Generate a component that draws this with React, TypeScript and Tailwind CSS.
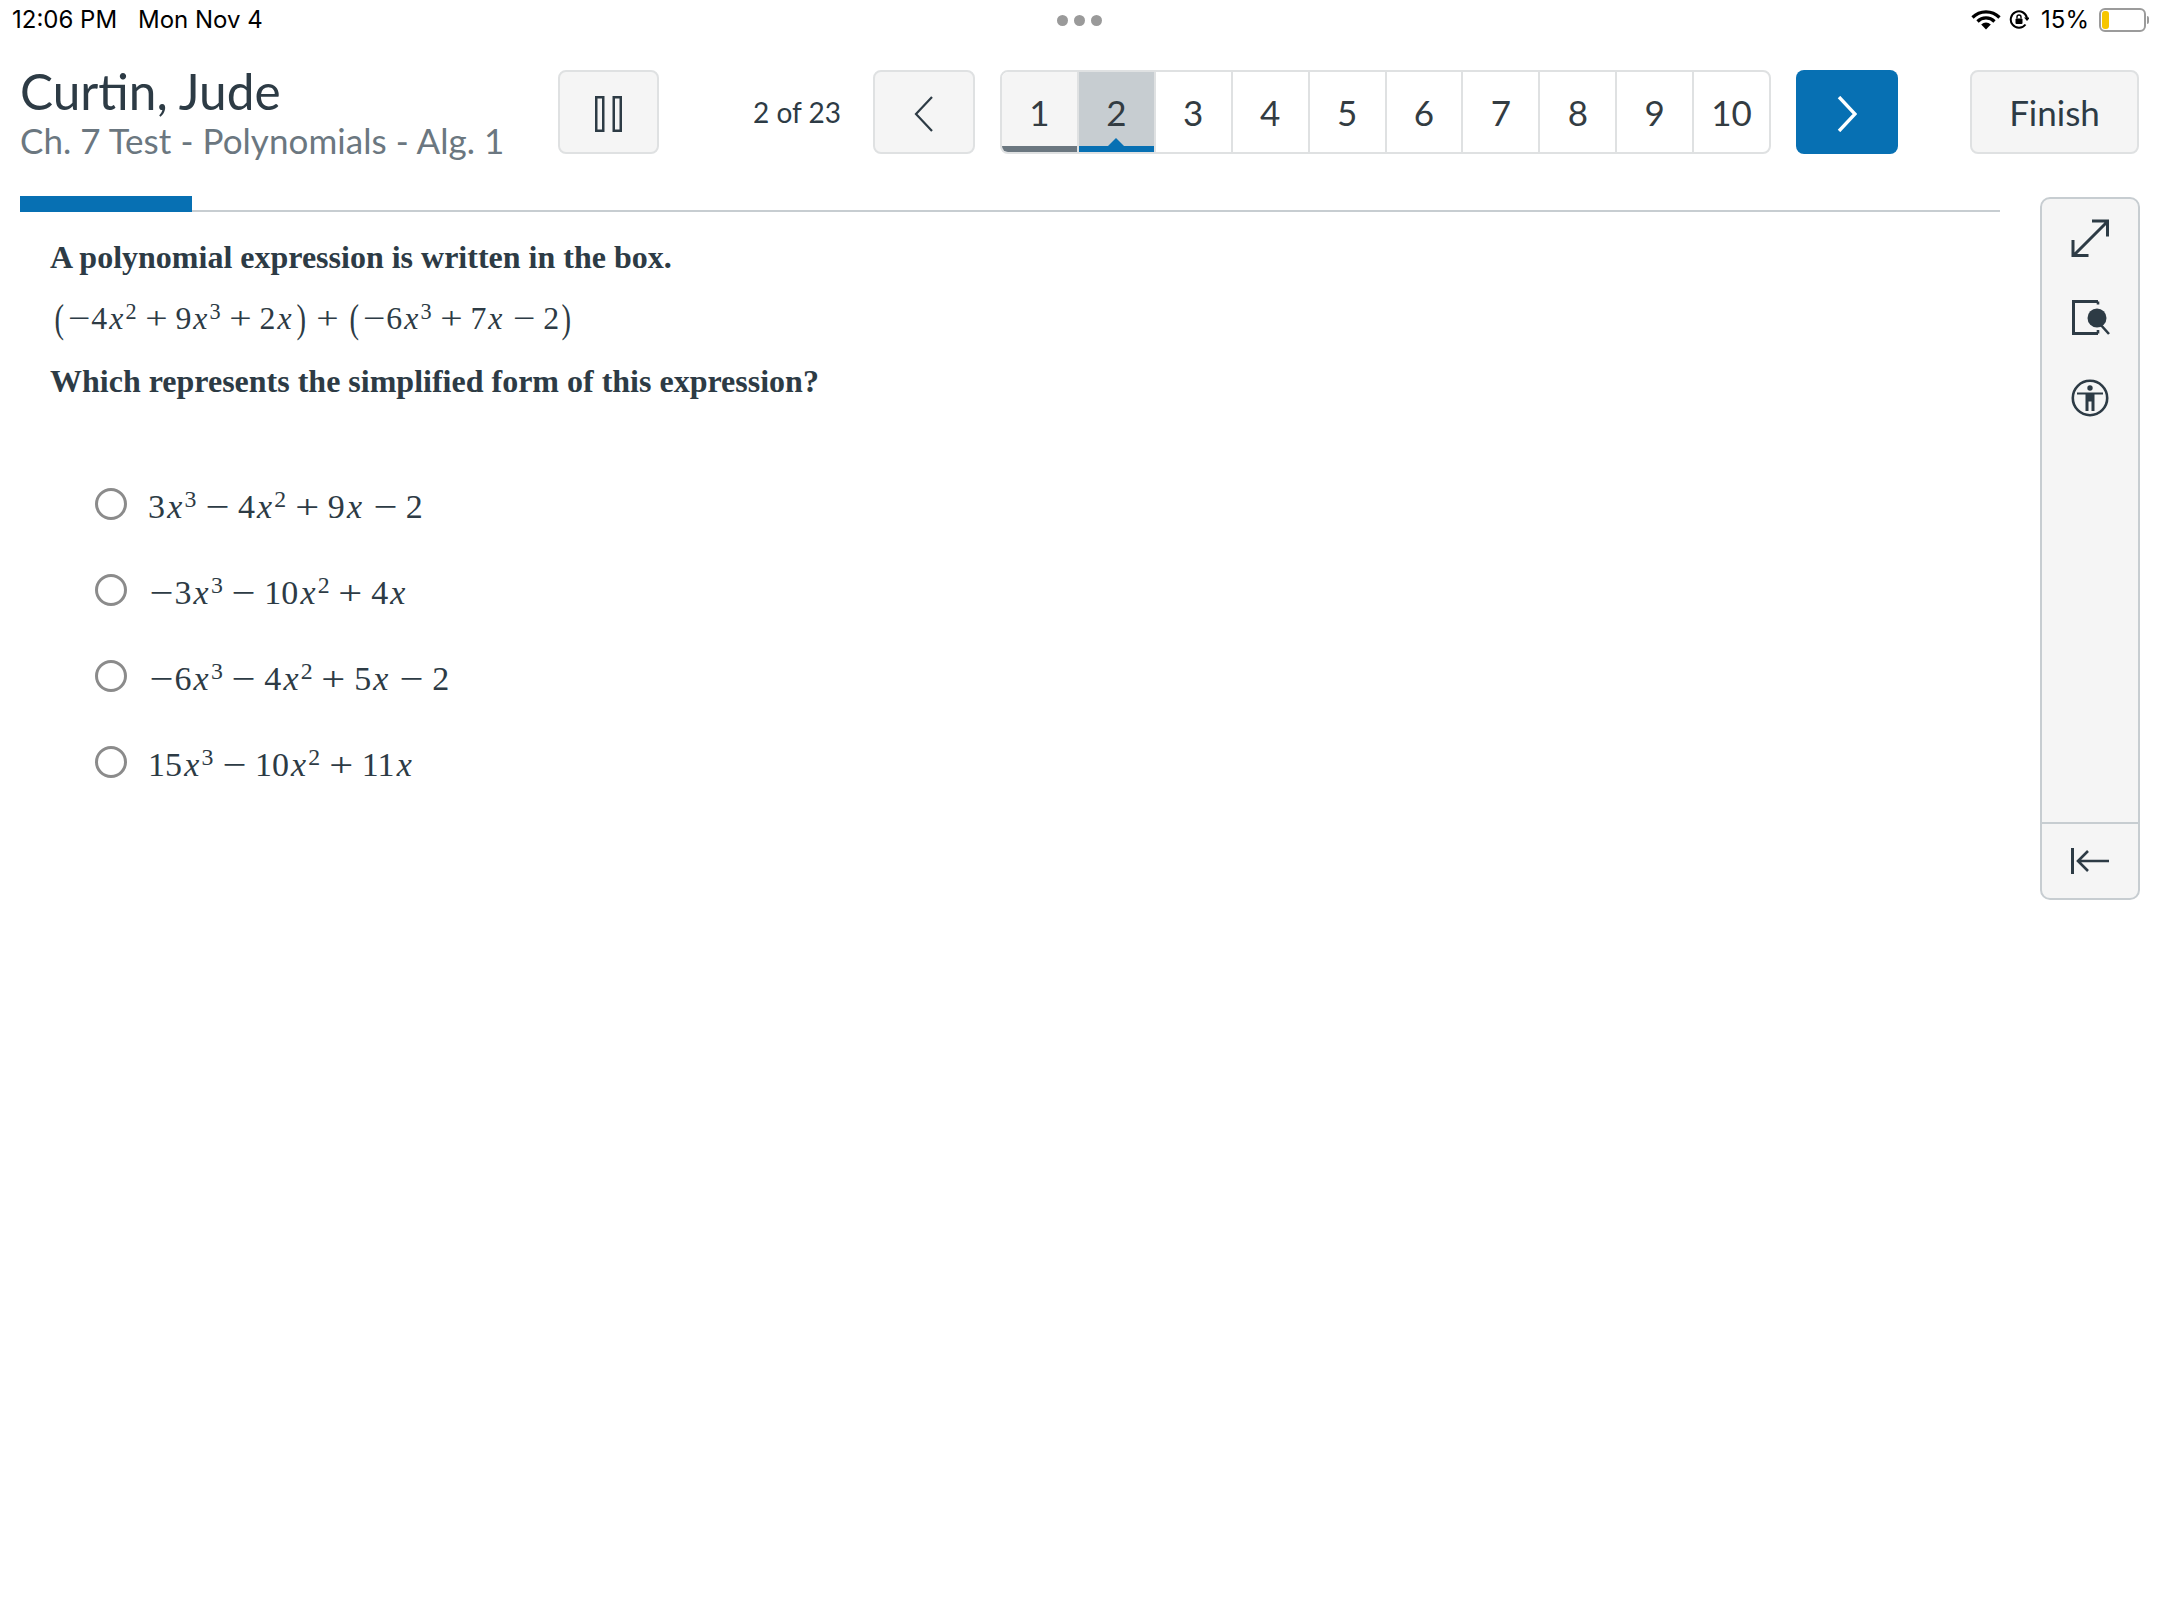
import { Fragment } from "react";

const lato = "font-['Lato',sans-serif]";
const mathFont = "font-['Liberation_Serif',serif]";

// tiny parser so each expression can be written as plain text, e.g. "3x^3 - 4x^2"
function MathExpr({ text, size }: { text: string; size: string }) {
  const tokens = text.match(/\^\d|\s[-+]\s|[-]|\(|\)|x|\d+/g) ?? [];
  return (
    <span className={`${mathFont} ${size} whitespace-nowrap leading-none text-[#2d3b45]`}>
      {tokens.map((t, i) => {
        if (t[0] === "^")
          return (
            <span key={i} className="relative top-[-0.45em] text-[0.7em] leading-none">
              {t[1]}
            </span>
          );
        if (t === "x")
          return (
            <i key={i} className="inline-block w-[0.572em] text-center">
              x
            </i>
          );
        if (t === " - " || t === "-" || t === " + ")
          return (
            <span
              key={i}
              className={`inline-block w-[0.778em] scale-x-125 text-center ${t === "-" ? "" : "mx-[0.222em]"}`}
            >
              {t.trim() === "-" ? "−" : "+"}
            </span>
          );
        if (t === "(" || t === ")")
          return (
            <span key={i} className="inline-block w-[0.46em] scale-x-90 scale-y-125 text-center">
              {t}
            </span>
          );
        return <Fragment key={i}>{t}</Fragment>;
      })}
    </span>
  );
}

function StatusBar() {
  return (
    <div className="flex h-10 items-center justify-between pl-3 pr-[11px] font-['Inter',sans-serif] text-[24px] text-black">
      <div className="flex w-[1045px] items-center">
        <span className="w-[126px]">12:06 PM</span>
        <span>Mon Nov 4</span>
      </div>
      <div className="flex gap-[6px]">
        <span className="size-[11px] rounded-full bg-[#9a9a9a]" />
        <span className="size-[11px] rounded-full bg-[#9a9a9a]" />
        <span className="size-[11px] rounded-full bg-[#9a9a9a]" />
      </div>
      <div className="flex w-[1047px] items-center justify-end">
        <svg width="30" height="20" viewBox="0 0 30 20" className="mr-2">
          <path d="M1.5 7.5a19 19 0 0 1 27 0" fill="none" stroke="#000" strokeWidth="3.2" />
          <path d="M6.5 11.5a12 12 0 0 1 17 0" fill="none" stroke="#000" strokeWidth="3.2" />
          <path d="M15 19.5l-4.8-5a7 7 0 0 1 9.6 0z" fill="#000" />
        </svg>
        <svg width="20" height="20" viewBox="0 0 20 20" className="mr-3">
          <path d="M16.5 14.5A8.2 8.2 0 1 1 18 8" fill="none" stroke="#000" strokeWidth="2" />
          <path d="M15 7.5h6l-3 3.6z" fill="#000" />
          <rect x="6.5" y="8.5" width="7" height="5.5" rx="1" fill="#000" />
          <path d="M8 8.5V7a2 2 0 0 1 4 0v1.5" fill="none" stroke="#000" strokeWidth="1.4" />
        </svg>
        <span className="mr-[10px]">15%</span>
        <div className="flex items-center">
          <div className="flex h-6 w-[47px] rounded-[6px] border-2 border-[#9b9b9b] p-[1px]">
            <div className="w-[7px] rounded-[3px] bg-[#f7c600]" />
          </div>
          <span className="ml-[1px] h-2 w-[2px] rounded-r-sm bg-[#9b9b9b]" />
        </div>
      </div>
    </div>
  );
}

function GrayButton({ className, children }: { className: string; children: React.ReactNode }) {
  return (
    <div className={`flex h-[84px] items-center justify-center rounded-[8px] border-2 border-[#dfe1e2] bg-[#f5f5f5] ${className}`}>
      {children}
    </div>
  );
}

function QuestionNav() {
  const nums = [1, 2, 3, 4, 5, 6, 7, 8, 9, 10];
  return (
    <div className="ml-[25px] flex h-[84px] w-[771px] overflow-hidden rounded-[8px] border-2 border-[#dfe1e2] bg-white">
      {nums.map((n) => (
        <div
          key={n}
          className={`relative flex flex-1 items-center justify-center border-r-2 border-[#dfe1e2] text-[35px] text-[#333c42] last:border-r-0 ${
            n === 1 ? "border-r-0 bg-[#f5f5f5]" : n === 2 ? "border-r-0 bg-[#c7cdd1]" : ""
          }`}
        >
          {n}
          {n === 1 && <span className="absolute inset-x-0 bottom-0 h-[6px] bg-[#6b7780]" />}
          {n === 2 && (
            <>
              <span className="absolute inset-x-0 bottom-0 h-[6px] bg-[#0770b3]" />
              <span className="absolute bottom-[6px] left-1/2 ml-[-8px] size-0 border-x-[8px] border-b-[8px] border-x-transparent border-b-[#0770b3]" />
            </>
          )}
        </div>
      ))}
    </div>
  );
}

function Header() {
  return (
    <div className={`${lato} ml-5 mt-[30px] flex h-[84px] items-center`}>
      <div className="w-[538px] pt-[4px] text-[#2d3b45]">
        <div className="text-[49.5px] leading-[52px]">Curtin, Jude</div>
        <div className="text-[35px] leading-[46px] tracking-[0.05px] text-[#6b7780]">Ch. 7 Test - Polynomials - Alg. 1</div>
      </div>
      <GrayButton className="w-[101px]">
        <svg width="27" height="36" viewBox="0 0 27 36" className="mt-[4px]">
          <rect x="1.25" y="1.25" width="7" height="33.5" fill="none" stroke="#2d3b45" strokeWidth="2.5" />
          <rect x="18.75" y="1.25" width="7" height="33.5" fill="none" stroke="#2d3b45" strokeWidth="2.5" />
        </svg>
      </GrayButton>
      <span className="ml-[94px] w-[120px] text-[28px] text-[#2d3b45]">2 of 23</span>
      <GrayButton className="w-[102px]">
        <svg width="20" height="36" viewBox="0 0 20 36" className="mt-[4px]">
          <path d="M18 1L2 18l16 17" fill="none" stroke="#2d3b45" strokeWidth="2.2" />
        </svg>
      </GrayButton>
      <QuestionNav />
      <div className="ml-[25px] flex h-[84px] w-[102px] items-center justify-center rounded-[8px] bg-[#0770b3]">
        <svg width="20" height="36" viewBox="0 0 20 36" className="mt-[4px]">
          <path d="M2 1l16 17L2 35" fill="none" stroke="#fff" strokeWidth="3.4" />
        </svg>
      </div>
      <GrayButton className="ml-[72px] w-[169px] text-[35px] text-[#2d3b45]">Finish</GrayButton>
    </div>
  );
}

function ToolPanel() {
  return (
    <div className="ml-[40px] mr-[20px] mt-[1px] flex h-[703px] w-[100px] flex-col rounded-[10px] border-2 border-[#c7cdd1] bg-[#f5f5f5]">
      <div className="flex flex-1 flex-col items-center gap-[43px] pt-[20px]">
        <svg width="38" height="38" viewBox="0 0 38 38">
          <path d="M2 37L36 3M21 2h15.5v15.5M2 21v15.5h15.5" fill="none" stroke="#2d3b45" strokeWidth="3" />
        </svg>
        <svg width="38" height="36" viewBox="0 0 38 36" className="ml-[1px]">
          <path d="M26 1.5H1.5v32H26" fill="none" stroke="#2d3b45" strokeWidth="3" />
          <path d="M26 1.5v3M26 30v3.5M28 24l9 10" fill="none" stroke="#2d3b45" strokeWidth="2.6" />
          <circle cx="25" cy="18" r="9.5" fill="#2d3b45" />
        </svg>
        <svg width="38" height="38" viewBox="0 0 38 38">
          <circle cx="19" cy="19" r="17.2" fill="none" stroke="#2d3b45" strokeWidth="2.6" />
          <circle cx="19" cy="9" r="2.7" fill="#2d3b45" />
          <path d="M6 13.5h26v2h-8.5V32h-3v-9.5h-3V32h-3V15.5H6z" fill="#2d3b45" />
        </svg>
      </div>
      <div className="flex h-[76px] items-center justify-center border-t-2 border-[#c7cdd1]">
        <svg width="38" height="26" viewBox="0 0 38 26">
          <path d="M1.5 0v26" fill="none" stroke="#2d3b45" strokeWidth="3" />
          <path d="M38 13H7M17 3L7 13l10 10" fill="none" stroke="#2d3b45" strokeWidth="2.6" />
        </svg>
      </div>
    </div>
  );
}

const options = [
  "3x^3 - 4x^2 + 9x - 2",
  "-3x^3 - 10x^2 + 4x",
  "-6x^3 - 4x^2 + 5x - 2",
  "15x^3 - 10x^2 + 11x",
];

export default function App() {
  return (
    <div className="min-h-[1620px] w-[2160px] bg-white">
      <StatusBar />
      <Header />
      <div className="mt-[42px] flex pl-5">
        <div className="w-[1980px]">
          <div className="flex h-4 items-end">
            <div className="h-4 w-[172px] bg-[#0770b3]" />
            <div className="h-[2px] flex-1 bg-[#c7cdd1]" />
          </div>
          <div className="pl-[30px] pt-[27px] text-[#2d3b45]">
            <p className="font-['Liberation_Serif',serif] text-[32px] font-bold leading-[36px]">
              A polynomial expression is written in the box.
            </p>
            <div className="mt-[25px] flex h-[38px] items-center pl-[2px]">
              <MathExpr text="(-4x^2 + 9x^3 + 2x) + (-6x^3 + 7x - 2)" size="text-[31.8px]" />
            </div>
            <p className="mt-[25px] font-['Liberation_Serif',serif] text-[32px] font-bold leading-[36px]">
              Which represents the simplified form of this expression?
            </p>
            <div className="mt-[85px] flex flex-col gap-[46px]">
              {options.map((o) => (
                <div key={o} className="flex h-10 items-center pl-[45px]">
                  <span className="mr-[21px] size-8 shrink-0 rounded-full border-[3px] border-[#8b8b8b] bg-white" />
                  <span className="pt-[5px]">
                    <MathExpr text={o} size="text-[34px]" />
                  </span>
                </div>
              ))}
            </div>
          </div>
        </div>
        <ToolPanel />
      </div>
    </div>
  );
}
